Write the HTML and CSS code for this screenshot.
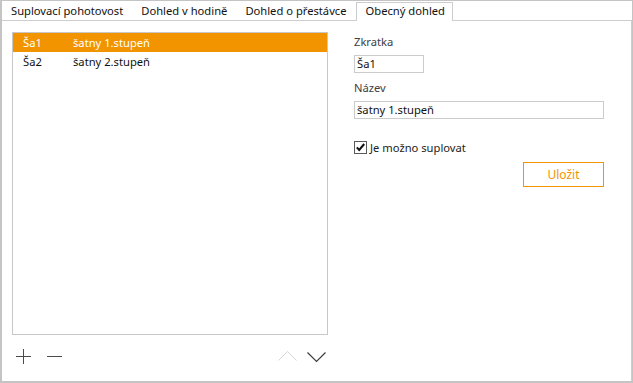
FILE: index.html
```html
<!DOCTYPE html>
<html lang="cs">
<head>
    <meta charset="UTF-8">
    <title>Obecný dohled</title>
    <link rel="stylesheet" href="styles.css">
</head>
<body>
    <div class="window">
        <div class="tabs">
            <div class="tab">Suplovací pohotovost</div>
            <div class="tab">Dohled v hodině</div>
            <div class="tab">Dohled o přestávce</div>
            <div class="tab active">Obecný dohled</div>
        </div>
        <div class="panel">
            <div class="left">
                <div class="list">
                    <div class="row selected"><span class="code">Ša1</span><span>šatny 1.stupeň</span></div>
                    <div class="row"><span class="code">Ša2</span><span>šatny 2.stupeň</span></div>
                </div>
                <div class="toolbar">
                    <svg class="icon" width="16" height="16" viewBox="0 0 16 16"><path d="M0 7.5H15M7.5 0V15" stroke="#4a4a4a" stroke-width="1"/></svg>
                    <svg class="icon" width="16" height="16" viewBox="0 0 16 16"><path d="M0 7.5H15" stroke="#4a4a4a" stroke-width="1"/></svg>
                    <span class="spacer"></span>
                    <svg class="icon" width="19" height="16" viewBox="0 0 19 16"><path d="M0.5 11.5L9.5 2.5L18.5 11.5" fill="none" stroke="#d6d6d6" stroke-width="1"/></svg>
                    <svg class="icon" width="19" height="16" viewBox="0 0 19 16"><path d="M0.5 3.5L9.5 12.5L18.5 3.5" fill="none" stroke="#3c3c3c" stroke-width="1.2"/></svg>
                </div>
            </div>
            <div class="form">
                <div class="label">Zkratka</div>
                <div class="input short">Ša1</div>
                <div class="label">Název</div>
                <div class="input">šatny 1.stupeň</div>
                <div class="check">
                    <svg width="13" height="13" viewBox="0 0 13 13"><rect x="0.5" y="0.5" width="12" height="12" fill="#fff" stroke="#5a5a5a"/><path d="M2.8 6.4L5.2 9L10.2 3" fill="none" stroke="#111" stroke-width="2"/></svg>
                    <span>Je možno suplovat</span>
                </div>
                <div class="actions">
                    <button class="button">Uložit</button>
                </div>
            </div>
        </div>
    </div>
</body>
</html>
```

FILE: styles.css
```css
body {
    margin: 0;
    font-family: 'Noto Sans', sans-serif;
    font-size: 11.2px;
    color: #111;
    background-color: #fff;
}
.window {
    width: 633px;
    height: 383px;
    box-sizing: border-box;
    border-top: 1px solid #c4c4c4;
    border-left: 2px solid #c4c4c4;
    border-right: 1px solid #c4c4c4;
    border-bottom: 2px solid #c4c4c4;
    display: flex;
    flex-direction: column;
}
.tabs {
    display: flex;
    height: 19px;
}
.tab {
    padding: 0 9px;
    line-height: 19px;
    color: #111;
    white-space: nowrap;
}
.tab.active {
    padding: 0 7px 0 9px;
    margin-top: 1px;
    line-height: 16px;
    border-left: 1px solid #cdcdcd;
    border-right: 1px solid #cdcdcd;
    border-top: 1px solid #cdcdcd;
    background-color: #fff;
    margin-bottom: -1px;
    position: relative;
}
.panel {
    flex: 1;
    display: flex;
    align-items: flex-start;
    border-top: 1px solid #cdcdcd;
    border-right: 1px solid #cdcdcd;
    padding: 11px 0 0 10px;
}
.left {
    width: 316px;
    display: flex;
    flex-direction: column;
}
.list {
    height: 303px;
    box-sizing: border-box;
    border: 1px solid #c8c8c8;
}
.row {
    display: flex;
    height: 19px;
    line-height: 19px;
    padding-left: 10px;
}
.row .code {
    width: 50px;
}
.row.selected {
    background-color: #f29400;
    color: #fff;
}
.toolbar {
    display: flex;
    align-items: center;
    gap: 14px;
    padding: 14px 2px 0 4px;
}
.spacer {
    flex: 1;
}
.icon {
    display: block;
}
.toolbar .icon:nth-child(2) {
    margin-left: 1px;
}
.toolbar .icon:last-child {
    margin-left: -4px;
}
.form {
    width: 250px;
    margin-left: 26px;
    padding-top: 2px;
    display: flex;
    flex-direction: column;
}
.label {
    color: #404040;
    line-height: 16px;
    margin-bottom: 5px;
}
.input {
    height: 18px;
    box-sizing: border-box;
    border: 1px solid #cbcbcb;
    padding-left: 2px;
    line-height: 16px;
    margin-bottom: 7px;
}
.input.short {
    width: 70px;
}
.check {
    display: flex;
    align-items: center;
    gap: 3px;
    margin-top: 14px;
    color: #222;
}
.check svg {
    display: block;
}
.actions {
    display: flex;
    justify-content: flex-end;
    margin-top: 7px;
}
.button {
    width: 81px;
    height: 25px;
    border: 1px solid #f29400;
    background-color: #fff;
    color: #f29400;
    font-family: inherit;
    font-size: 12px;
    padding: 0;
}
```
